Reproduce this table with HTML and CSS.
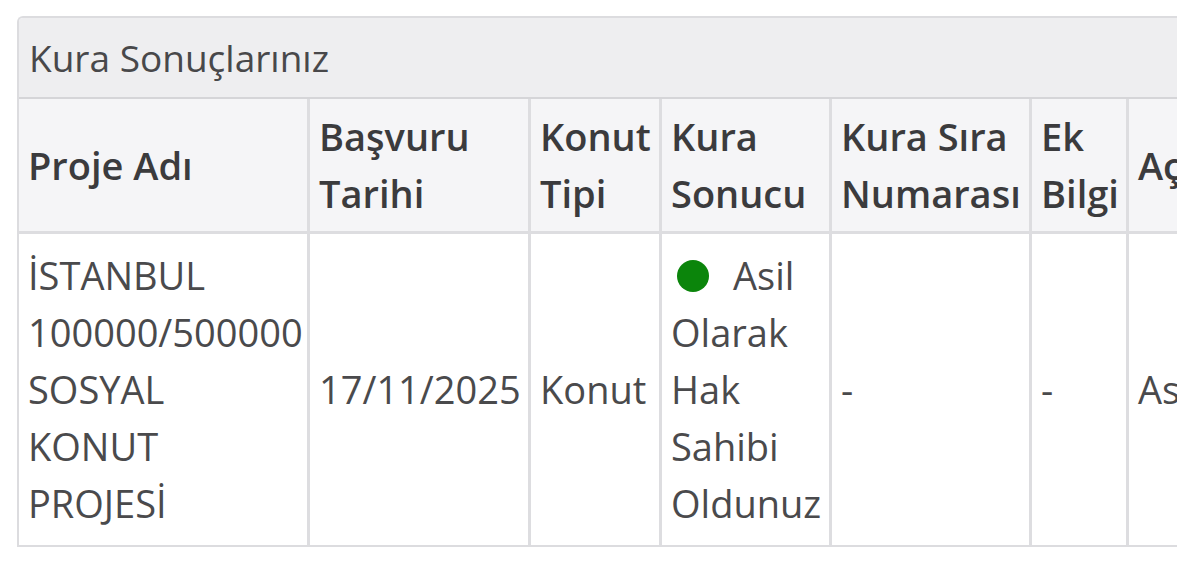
FILE: index.html
```html
<!DOCTYPE html>
<html lang="tr">
<head>
<meta charset="utf-8">
<title>Kura Sonuçlarınız</title>
<link rel="stylesheet" href="styles.css">
</head>
<body>
<div class="panel">
  <div class="panel-heading">Kura Sonuçlarınız</div>
  <div class="table-wrap">
    <table class="results">
      <thead>
        <tr>
          <th class="c-proje">Proje Adı</th>
          <th class="c-tarih">Başvuru Tarihi</th>
          <th class="c-tip">Konut Tipi</th>
          <th class="c-sonuc">Kura Sonucu</th>
          <th class="c-sira">Kura Sıra Numarası</th>
          <th class="c-ek">Ek Bilgi</th>
          <th class="c-aciklama">Açıklama</th>
        </tr>
      </thead>
      <tbody>
        <tr>
          <td>İSTANBUL 100000/500000 SOSYAL KONUT PROJESİ</td>
          <td>17/11/2025</td>
          <td>Konut</td>
          <td><span class="dot"></span>Asil Olarak Hak Sahibi Oldunuz</td>
          <td>-</td>
          <td>-</td>
          <td class="nowrap">Asil Hak Sahibi</td>
        </tr>
      </tbody>
    </table>
  </div>
</div>
</body>
</html>
```

FILE: styles.css
```css
html, body {
  margin: 0;
  padding: 0;
  background: #ffffff;
}

body {
  font-family: "Open Sans", "DejaVu Sans", sans-serif;
  color: #4a4a4c;
}

.panel {
  margin: 16px 0 0 17px;
  width: 1158px;
  border: 2px solid #dcdcdf;
  border-right: none;
  border-radius: 6px 0 0 0;
  overflow: hidden;
  background: #ffffff;
}

.panel-heading {
  background: #eeeef0;
  font-size: 37px;
  line-height: 50px;
  padding: 15px 10px 14px;
  color: #48484a;
  border-bottom: 2px solid #d5d5d8;
  white-space: nowrap;
}

.table-wrap {
  overflow: hidden;
}

.results {
  table-layout: fixed;
  border-collapse: separate;
  border-spacing: 0;
  width: 1407px;
  font-size: 38px;
  line-height: 57px;
}

.results th,
.results td {
  box-sizing: border-box;
  text-align: left;
  vertical-align: middle;
  border-left: 3px solid #dddde0;
  padding: 0 9px;
}

.results th:first-child,
.results td:first-child {
  border-left: none;
  padding-left: 9px;
}

.results th {
  background: #f5f5f7;
  color: #3b3b3d;
  font-weight: 600;
  padding-top: 9px;
  padding-bottom: 9px;
  border-bottom: 3px solid #dddde0;
}

.results td {
  padding-top: 13px;
  padding-bottom: 13px;
}

.c-proje { width: 288px; }
.c-tarih { width: 221px; }
.c-tip { width: 131px; }
.c-sonuc { width: 170px; }
.c-sira { width: 200px; }
.c-ek { width: 97px; }
.c-aciklama { width: 300px; }

.nowrap { white-space: nowrap; }

.dot {
  display: inline-block;
  width: 32px;
  height: 32px;
  border-radius: 50%;
  background: #0b850b;
  margin: 0 24px 0 6px;
  vertical-align: -2px;
}
```
